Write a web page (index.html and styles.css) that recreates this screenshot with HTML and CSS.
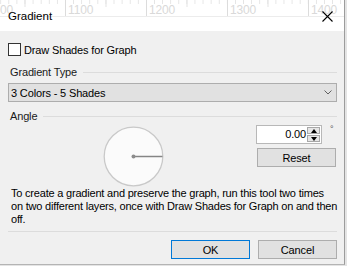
FILE: index.html
```html
<!DOCTYPE html>
<html lang="en">
<head>
    <meta charset="UTF-8">
    <meta name="viewport" content="width=device-width, initial-scale=1.0">
    <title>Gradient</title>
    <link rel="stylesheet" href="styles.css">
</head>
<body>
    <div class="dialog">
        <div class="titlebar">
            <div class="ruler">
                <span>1000</span>
                <span>1100</span>
                <span>1200</span>
                <span>1300</span>
                <span>1400</span>
            </div>
            <span class="title">Gradient</span>
            <svg class="close" width="11" height="11" viewBox="0 0 11 11">
                <path d="M0.5 0.5 L10.5 10.5 M10.5 0.5 L0.5 10.5" stroke="#000" stroke-width="1.1" fill="none"/>
            </svg>
        </div>

        <div class="content">
            <label class="check-row">
                <span class="checkbox"></span>
                <span>Draw Shades for Graph</span>
            </label>

            <div class="group-label"><span>Gradient Type</span></div>
            <div class="select">
                <span>3 Colors - 5 Shades</span>
                <svg width="8" height="5" viewBox="0 0 8 5">
                    <path d="M0.5 0.5 L4 4 L7.5 0.5" stroke="#606060" stroke-width="1" fill="none"/>
                </svg>
            </div>

            <div class="group-label angle-label"><span>Angle</span></div>
            <div class="angle-row">
                <svg class="dial" width="62" height="61" viewBox="0 0 62 61">
                    <circle cx="30.5" cy="30.5" r="29.3" fill="#fbfbfb" stroke="#c9c9c9" stroke-width="1.3"/>
                    <line x1="30.5" y1="30.5" x2="59.5" y2="30.5" stroke="#858585" stroke-width="1.5"/>
                    <circle cx="30.5" cy="30.5" r="2" fill="#8c8c8c"/>
                </svg>
                <div class="angle-controls">
                    <div class="spin-row">
                        <div class="spin">
                            <span class="spin-value">0.00</span>
                            <div class="spin-arrows">
                                <span class="arrow up"></span>
                                <span class="arrow down"></span>
                            </div>
                        </div>
                        <span class="degree">°</span>
                    </div>
                    <button class="btn">Reset</button>
                </div>
            </div>

            <p class="note">To create a gradient and preserve the graph, run this tool two times<br>on two different layers, once with Draw Shades for Graph on and then<br>off.</p>

            <div class="separator"></div>

            <div class="actions">
                <button class="btn btn-default">OK</button>
                <button class="btn">Cancel</button>
            </div>
        </div>
    </div>
</body>
</html>
```

FILE: styles.css
```css
body {
    margin: 0;
    width: 347px;
    height: 266px;
    background-color: #e4e4e4;
    font-family: "Liberation Sans", Arial, sans-serif;
    font-size: 11px;
    letter-spacing: -0.15px;
    color: #000;
    overflow: hidden;
}

.dialog {
    width: 344px;
    height: 264px;
    background-color: #f0f0f0;
    border-right: 1px solid #9c9c9c;
    border-bottom: 1px solid #b4b4b4;
}

/* title bar, the canvas ruler shows faintly behind it */
.titlebar {
    position: relative;
    height: 31px;
    background-color: #fff;
    display: flex;
    align-items: center;
    justify-content: space-between;
    padding: 1px 11px 0 8px;
    box-sizing: border-box;
}

.ruler {
    position: absolute;
    top: 0;
    left: 0;
    right: 0;
    height: 16px;
    display: flex;
    border-bottom: 1px solid #ececec;
    background-image:
        linear-gradient(to right, #dcdcdc 1px, transparent 1px),
        linear-gradient(to right, #e2e2e2 1px, transparent 1px),
        linear-gradient(to right, #e4e4e4 1px, transparent 1px);
    background-size: 81px 16px, 40.5px 7px, 8.1px 4px;
    background-repeat: repeat-x;
    background-position: 65px 0, 65px 0, 65px 0;
    overflow: hidden;
}

.ruler span {
    flex: 0 0 81px;
    padding-left: 3px;
    box-sizing: border-box;
    color: #d9d9d9;
    font-size: 12px;
    line-height: 16px;
    padding-top: 2px;
}

.ruler span:first-child {
    margin-left: -16px;
}

.title {
    position: relative;
    font-size: 11.5px;
    letter-spacing: 0;
}

.close {
    position: relative;
    margin-top: 1px;
}

.content {
    padding: 12px 7px 0 8px;
}

.check-row {
    display: flex;
    align-items: center;
    gap: 3px;
    height: 13px;
}

.checkbox {
    width: 11px;
    height: 11px;
    border: 1px solid #333;
    background-color: #fff;
}

.group-label {
    display: flex;
    align-items: center;
    gap: 6px;
    margin-top: 9px;
    padding-left: 2px;
    height: 14px;
    color: #1a1a1a;
}

.group-label::after {
    content: "";
    flex: 1;
    height: 1px;
    background-color: #dcdcdc;
}

.angle-label {
    margin-top: 7px;
}

.select {
    margin-top: 4px;
    height: 19px;
    border: 1px solid #adadad;
    background-color: #e1e1e1;
    box-sizing: border-box;
    display: flex;
    align-items: center;
    justify-content: space-between;
    padding: 0 4px 0 2px;
}

.angle-row {
    display: flex;
    align-items: flex-start;
    margin-top: 2px;
}

.dial {
    margin-left: 95px;
    margin-top: 1px;
}

.angle-controls {
    margin-left: auto;
    width: 80px;
    display: flex;
    flex-direction: column;
    gap: 4px;
}

.spin-row {
    display: flex;
    align-items: flex-start;
}

.spin {
    width: 66px;
    height: 19px;
    box-sizing: border-box;
    border: 1px solid #b8b8b8;
    background-color: #fff;
    display: flex;
    align-items: stretch;
    margin-left: -1px;
}

.spin-value {
    flex: 1;
    text-align: right;
    line-height: 17px;
    padding-right: 1px;
}

.spin-arrows {
    width: 13px;
    display: flex;
    flex-direction: column;
    gap: 1px;
    padding: 1px 1px 1px 0;
}

.arrow {
    flex: 1;
    background-color: #e6e6e6;
    border: 1px solid #a8a8a8;
    display: flex;
    align-items: center;
    justify-content: center;
}

.arrow::before {
    content: "";
    border-left: 3.5px solid transparent;
    border-right: 3.5px solid transparent;
}

.arrow.up::before {
    border-bottom: 4px solid #000;
}

.arrow.down::before {
    border-top: 4px solid #000;
}

.degree {
    margin-left: 8px;
    font-size: 9px;
    line-height: 9px;
    color: #555;
}

.btn {
    height: 19px;
    width: 79px;
    padding: 0;
    border: 1px solid #adadad;
    background-color: #e1e1e1;
    font-family: "Liberation Sans", Arial, sans-serif;
    font-size: 11px;
    letter-spacing: -0.15px;
    color: #000;
}

.btn-default {
    border-color: #0078d7;
}

.note {
    margin: 0 -4px 0 0;
    padding-left: 3px;
    line-height: 13px;
    letter-spacing: -0.2px;
    white-space: nowrap;
}

.separator {
    margin-top: 5px;
    height: 1px;
    background-color: #dcdcdc;
}

.actions {
    display: flex;
    justify-content: flex-end;
    gap: 8px;
    margin-top: 8px;
}
```
